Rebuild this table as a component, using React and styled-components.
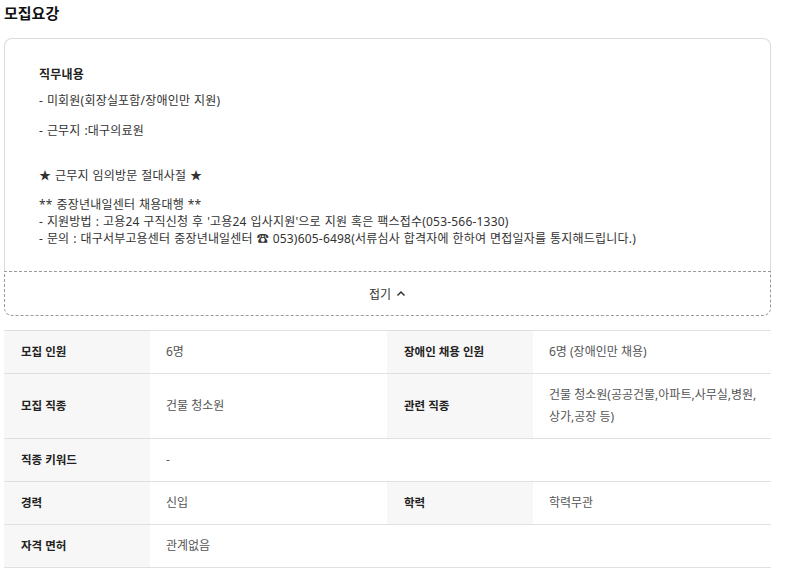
import React from "react";
import styled, { createGlobalStyle } from "styled-components";

const Global = createGlobalStyle`
  html, body { margin: 0; padding: 0; background: #fff; }
  body { font-family: "Noto Sans", "Noto Sans CJK KR", sans-serif; color: #222; }
`;

const Page = styled.div`
  width: 767px;
  padding: 0 0 0 4px;
`;

const Title = styled.h2`
  margin: 0;
  padding-top: 3px;
  font-family: "Noto Sans CJK KR", sans-serif;
  font-size: 15px;
  font-weight: 700;
  line-height: 20px;
  color: #111;
`;

const Card = styled.section`
  margin-top: 15px;
  display: flex;
  flex-direction: column;
`;

const CardBody = styled.div`
  border: 1px solid #dcdcdc;
  border-bottom: none;
  border-radius: 8px 8px 0 0;
  padding: 27px 34px 24px;
  font-size: 12px;
  line-height: 17px;
  letter-spacing: 0.2px;
  word-spacing: 0.5px;
  color: #333;
`;

const Heading = styled.div`
  font-weight: 700;
  color: #222;
  margin-bottom: 9px;
`;

const Line = styled.div`
  margin-top: ${(p) => p.$gap || 0}px;
  white-space: pre;
`;

const FoldButton = styled.button`
  all: unset;
  box-sizing: border-box;
  height: 45px;
  border: 1px dashed #9a9a9a;
  border-radius: 0 0 8px 8px;
  display: flex;
  align-items: center;
  justify-content: center;
  gap: 5px;
  font-family: inherit;
  font-size: 12px;
  color: #333;
  cursor: pointer;
`;

const Table = styled.div`
  margin-top: 14px;
  border-top: 1px solid #e0e0e0;
`;

const Row = styled.div`
  display: grid;
  grid-template-columns: 146px 237px 146px 1fr;
  border-bottom: 1px solid #e0e0e0;
  font-size: 12px;
  line-height: 22px;
`;

const Label = styled.div`
  background: #f7f7f7;
  padding: 10px 17px;
  font-size: 11.5px;
  font-weight: 700;
  color: #222;
  display: flex;
  align-items: center;
`;

const Value = styled.div`
  padding: 10px 16px;
  color: #555;
  display: flex;
  flex-direction: column;
  justify-content: center;
  white-space: nowrap;
  grid-column: ${(p) => (p.$wide ? "span 3" : "auto")};
`;

const Chevron = () => (
  <svg width="10" height="7" viewBox="0 0 10 7" fill="none">
    <path d="M1.5 5.5L5 2L8.5 5.5" stroke="#333" strokeWidth="1.5" />
  </svg>
);

export default function App() {
  return (
    <Page>
      <Global />
      <Title>모집요강</Title>
      <Card>
        <CardBody>
          <Heading>직무내용</Heading>
          <Line>- 미회원(회장실포함/장애인만 지원)</Line>
          <Line $gap={13}>- 근무지 :대구의료원</Line>
          <Line $gap={28}>★ 근무지 임의방문 절대사절 ★</Line>
          <Line $gap={12}>** 중장년내일센터 채용대행 **</Line>
          <Line>- 지원방법 : 고용24 구직신청 후 '고용24 입사지원'으로 지원 혹은 팩스접수(053-566-1330)</Line>
          <Line>- 문의 : 대구서부고용센터 중장년내일센터 ☎ 053)605-6498(서류심사 합격자에 한하여 면접일자를 통지해드립니다.)</Line>
        </CardBody>
        <FoldButton type="button">
          접기 <Chevron />
        </FoldButton>
      </Card>
      <Table>
        <Row>
          <Label>모집 인원</Label>
          <Value>6명</Value>
          <Label>장애인 채용 인원</Label>
          <Value>6명 (장애인만 채용)</Value>
        </Row>
        <Row>
          <Label>모집 직종</Label>
          <Value>건물 청소원</Value>
          <Label>관련 직종</Label>
          <Value>
            <span>건물 청소원(공공건물,아파트,사무실,병원,</span>
            <span>상가,공장 등)</span>
          </Value>
        </Row>
        <Row>
          <Label>직종 키워드</Label>
          <Value $wide>-</Value>
        </Row>
        <Row>
          <Label>경력</Label>
          <Value>신입</Value>
          <Label>학력</Label>
          <Value>학력무관</Value>
        </Row>
        <Row>
          <Label>자격 면허</Label>
          <Value $wide>관계없음</Value>
        </Row>
      </Table>
    </Page>
  );
}
